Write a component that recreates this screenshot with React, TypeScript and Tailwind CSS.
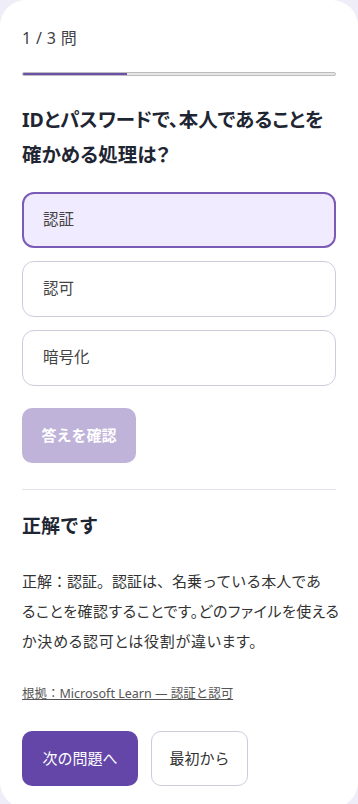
const options = [
  { label: "認証", selected: true },
  { label: "認可", selected: false },
  { label: "暗号化", selected: false },
];

const App = () => {
  return (
    <div
      className="min-h-screen bg-[#efedf7]"
      style={{ fontFamily: '"Noto Sans", "Noto Sans CJK JP", sans-serif' }}
    >
      <div className="bg-white rounded-[26px] px-[22px] pt-[26px] pb-[22px] min-h-[803px]">
        <p className="text-[16px] leading-6 text-[#3f3f46] tracking-[0.02em]">1 / 3 問</p>

        <div className="mt-[22px] h-[4px] rounded-full bg-[#e6e6e6] border border-[#bdbdbd] flex overflow-hidden">
          <div className="w-1/3 -my-px bg-[#6b4fa8]" />
        </div>

        <h1 className="mt-[26px] text-[19.5px] leading-[35px] font-bold text-[#1f2633] [font-feature-settings:'palt']">
          IDとパスワードで、本人であることを確かめる処理は？
        </h1>

        <div className="mt-[20px] flex flex-col gap-[13px]">
          {options.map((o) => (
            <button
              key={o.label}
              className={
                o.selected
                  ? "h-[56px] w-full rounded-xl border-2 border-[#7a5bb5] bg-[#f1ebff] px-[19px] text-left text-[15.5px] text-[#444]"
                  : "h-[56px] w-full rounded-xl border border-[#cfcbdd] bg-white px-[20px] text-left text-[15.5px] text-[#444]"
              }
            >
              {o.label}
            </button>
          ))}
        </div>

        <button className="mt-[22px] h-[55px] w-[114px] rounded-[10px] bg-[#c0b3da] text-[15px] font-bold text-white">
          答えを確認
        </button>

        <div className="mt-[26px] h-px bg-[#e3e3ea]" />

        <h2 className="mt-[22px] text-[19px] leading-[28px] font-bold text-[#1f2633]">正解です</h2>

        <p className="mt-[26px] text-[15px] leading-[30px] text-[#333] whitespace-nowrap">
          <span>正解：認証。認証は、名乗っている本人であ</span>
          <br />
          <span className="tracking-[0.035em] [font-feature-settings:'palt']">
            ることを確認することです。どのファイルを使える
          </span>
          <br />
          <span className="tracking-[0.05em] [font-feature-settings:'palt']">か決める認可とは役割が違います。</span>
        </p>

        <a href="#" className="mt-[28px] block w-fit text-[12.5px] leading-5 text-[#555] underline">
          根拠：Microsoft Learn — 認証と認可
        </a>

        <div className="mt-[27px] flex gap-[13px]">
          <button className="h-[55px] w-[116px] rounded-[10px] bg-[#6446a8] text-[15px] text-white">
            次の問題へ
          </button>
          <button className="h-[55px] w-[97px] rounded-[10px] border border-[#cfcbdd] bg-white text-[15px] text-[#333]">
            最初から
          </button>
        </div>
      </div>
    </div>
  );
};

export default App;
